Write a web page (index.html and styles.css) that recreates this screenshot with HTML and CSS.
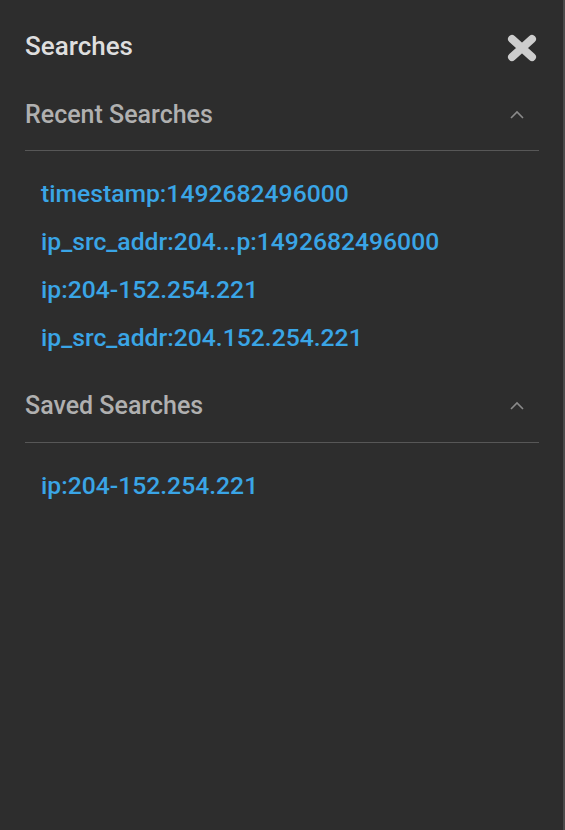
FILE: index.html
```html
<!DOCTYPE html>
<html>
<head>
<meta charset="utf-8">
<link rel="stylesheet" href="styles.css">
</head>
<body>
<div class="panel">
  <div class="header">
    <h1 class="title">Searches</h1>
    <svg class="close" width="32" height="30" viewBox="0 0 32 30">
      <path d="M6 6 L26 24 M26 6 L6 24" stroke="#cdcdcd" stroke-width="8" stroke-linecap="round"/>
    </svg>
  </div>
  <section class="group">
    <div class="group-head">
      <span class="group-title">Recent Searches</span>
      <svg class="chev" width="16" height="10" viewBox="0 0 16 10"><path d="M2 8 L8 2 L14 8" fill="none" stroke="#8a8a8a" stroke-width="1.6"/></svg>
    </div>
    <ul class="list">
      <li>timestamp:1492682496000</li>
      <li>ip_src_addr:204...p:1492682496000</li>
      <li>ip:204-152.254.221</li>
      <li>ip_src_addr:204.152.254.221</li>
    </ul>
  </section>
  <section class="group">
    <div class="group-head">
      <span class="group-title">Saved Searches</span>
      <svg class="chev" width="16" height="10" viewBox="0 0 16 10"><path d="M2 8 L8 2 L14 8" fill="none" stroke="#8a8a8a" stroke-width="1.6"/></svg>
    </div>
    <ul class="list">
      <li>ip:204-152.254.221</li>
    </ul>
  </section>
</div>
</body>
</html>
```
FILE: styles.css
```css
html, body {
  margin: 0;
  padding: 0;
  height: 100%;
  background: #2d2d2d;
  font-family: Roboto, "Liberation Sans", sans-serif;
}
.panel {
  height: 830px;
  box-sizing: border-box;
  padding: 0 24px 0 25px;
  border-right: 2px solid #4a4a4a;
}
.header {
  display: flex;
  justify-content: space-between;
  align-items: center;
  padding-top: 29px;
  height: 34px;
}
.title {
  margin: 0;
  font-size: 26px;
  font-weight: 500;
  color: #dedede;
  letter-spacing: 0;
}
.close {
  margin-right: 1px;
  margin-top: 3px;
}
.group-head {
  display: flex;
  justify-content: space-between;
  align-items: center;
  height: 30px;
  padding: 37px 0 20px;
  border-bottom: 1px solid #575757;
}
.group + .group .group-head {
  padding: 29px 0 21px;
}
.group-title {
  font-size: 25px;
  font-weight: 500;
  color: #b0b0b0;
  line-height: 30px;
}
.chev {
  margin-right: 14px;
}
.list {
  list-style: none;
  margin: 0;
  padding: 19px 0 0 16px;
}
.list li {
  font-size: 24.7px;
  font-weight: 500;
  color: #3aa5e6;
  height: 48px;
  line-height: 48px;
}
```
